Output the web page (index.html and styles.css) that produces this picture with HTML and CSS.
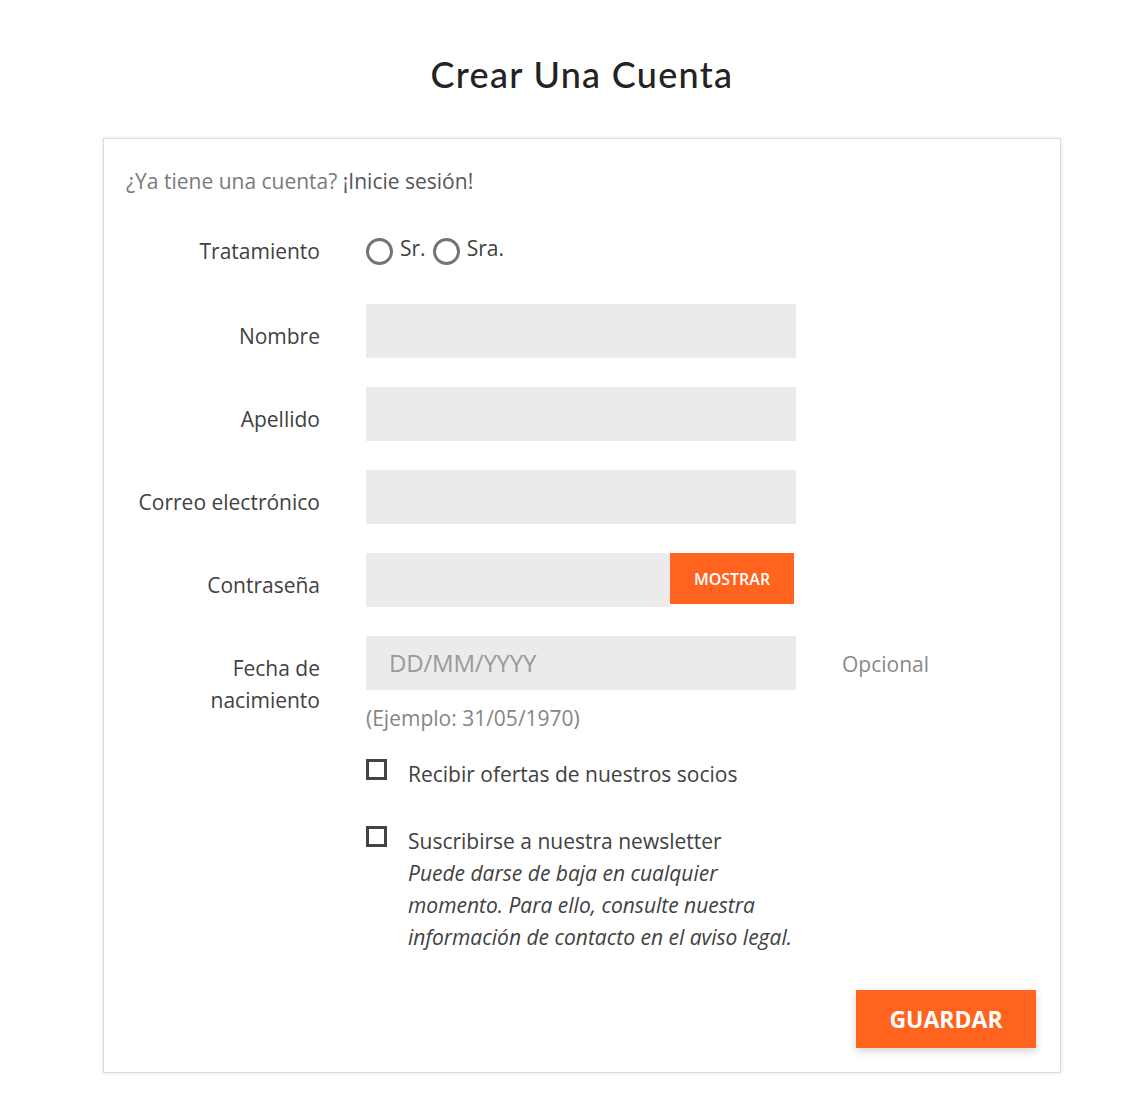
FILE: index.html
```html
<!DOCTYPE html>
<html lang="es">
<head>
<meta charset="utf-8">
<title>Crear Una Cuenta</title>
<link rel="stylesheet" href="styles.css">
</head>
<body>
<div class="page">
  <h1 class="title">Crear Una Cuenta</h1>
  <section class="card">
    <p class="login">¿Ya tiene una cuenta? <a class="login-link" href="#">¡Inicie sesión!</a></p>
    <form class="form">
      <div class="row row-radio">
        <span class="label">Tratamiento</span>
        <div class="field radios">
          <label class="radio"><span class="radio-dot"></span><span class="radio-text">Sr.</span></label>
          <label class="radio"><span class="radio-dot"></span><span class="radio-text">Sra.</span></label>
        </div>
      </div>
      <div class="row">
        <span class="label">Nombre</span>
        <div class="field"><div class="input"></div></div>
      </div>
      <div class="row">
        <span class="label">Apellido</span>
        <div class="field"><div class="input"></div></div>
      </div>
      <div class="row">
        <span class="label">Correo electrónico</span>
        <div class="field"><div class="input"></div></div>
      </div>
      <div class="row">
        <span class="label">Contraseña</span>
        <div class="field">
          <div class="input input-group">
            <span class="input-fill"></span>
            <span class="btn-show">MOSTRAR</span>
          </div>
        </div>
      </div>
      <div class="row row-date">
        <span class="label">Fecha de<br>nacimiento</span>
        <div class="field">
          <div class="input input-placeholder">DD/MM/YYYY</div>
          <div class="help">(Ejemplo: 31/05/1970)</div>
        </div>
        <span class="comment">Opcional</span>
      </div>
      <div class="row row-check">
        <span class="label"></span>
        <div class="field check">
          <span class="checkbox"></span>
          <span class="check-text">Recibir ofertas de nuestros socios</span>
        </div>
      </div>
      <div class="row row-check row-check2">
        <span class="label"></span>
        <div class="field check">
          <span class="checkbox"></span>
          <span class="check-text">Suscribirse a nuestra newsletter<br><em class="check-note">Puede darse de baja en cualquier momento. Para ello, consulte nuestra información de contacto en el aviso legal.</em></span>
        </div>
      </div>
      <div class="footer">
        <span class="btn-save">GUARDAR</span>
      </div>
    </form>
  </section>
</div>
</body>
</html>
```

FILE: styles.css
```css
* { box-sizing: border-box; }

html, body {
  margin: 0;
  padding: 0;
  background: #ffffff;
}

body {
  font-family: "Open Sans", "Noto Sans", "Liberation Sans", sans-serif;
  color: #414141;
}

.page {
  padding: 0 79px 41px 103px;
}

.title {
  margin: 0;
  padding-top: 52px;
  height: 138px;
  text-align: center;
  font-family: Lato, "Open Sans", sans-serif;
  font-weight: 500;
  font-size: 36px;
  line-height: 44px;
  letter-spacing: 1.3px;
  color: #232323;
}

.card {
  width: 958px;
  border: 1px solid #dcdcdc;
  box-shadow: 0 0 4px rgba(0, 0, 0, 0.12);
  padding: 26px 24px 24px 22px;
  background: #fff;
}

.login {
  margin: 0 0 38px 0;
  font-size: 21px;
  line-height: 32px;
  color: #7a7a7a;
}

.login-link {
  color: #555;
  text-decoration: none;
}

.form {
  margin: 0;
}

.row {
  display: grid;
  grid-template-columns: 194px 430px auto;
  column-gap: 46px;
  align-items: start;
  margin-bottom: 29px;
}

.label {
  text-align: right;
  font-size: 21px;
  line-height: 32px;
  padding-top: 16px;
  color: #414141;
}

.row-radio {
  margin-bottom: 37px;
}

.row-radio .label {
  padding-top: 0;
}

.radios {
  display: flex;
  align-items: center;
  height: 32px;
  gap: 7px;
}

.radio {
  display: flex;
  align-items: center;
  gap: 7px;
}

.radio-dot {
  width: 27px;
  height: 27px;
  border: 3.5px solid #747474;
  border-radius: 50%;
  background: #fff;
  flex: none;
}

.radio-text {
  font-size: 21px;
  line-height: 20px;
  align-self: flex-start;
  color: #414141;
}

.input {
  height: 54px;
  background: #ebebeb;
}

.input-group {
  display: flex;
  background: transparent;
}

.input-fill {
  width: 304px;
  height: 54px;
  background: #ebebeb;
}

.btn-show {
  width: 124px;
  height: 51px;
  background: #ff631d;
  color: #fff;
  font-weight: 600;
  font-size: 16px;
  display: flex;
  align-items: center;
  justify-content: center;
}

.input-placeholder {
  padding-left: 23px;
  font-size: 24px;
  line-height: 54px;
  color: #9a9a9a;
  letter-spacing: -0.2px;
}

.help {
  margin-top: 12px;
  font-size: 21px;
  line-height: 32px;
  color: #858585;
}

.comment {
  padding-top: 12px;
  font-size: 21px;
  line-height: 32px;
  color: #8a8a8a;
}

.row-date {
  margin-bottom: 24px;
}

.row-check {
  margin-bottom: 35px;
}

.row-check .label {
  padding-top: 0;
}

.check {
  display: flex;
  align-items: flex-start;
  gap: 21px;
}

.checkbox {
  flex: none;
  width: 21px;
  height: 21px;
  border: 3px solid #434343;
  background: #fff;
  margin-top: 1px;
}

.check-text {
  font-size: 21px;
  line-height: 32px;
  color: #414141;
}

.check-note {
  font-style: italic;
}

.row-check2 {
  margin-bottom: 37px;
}

.footer {
  display: flex;
  justify-content: flex-end;
}

.btn-save {
  width: 180px;
  height: 58px;
  background: #ff631d;
  color: #fff;
  font-weight: 700;
  font-size: 23px;
  display: flex;
  align-items: center;
  justify-content: center;
  box-shadow: 0 3px 8px rgba(0, 0, 0, 0.18);
}
```
